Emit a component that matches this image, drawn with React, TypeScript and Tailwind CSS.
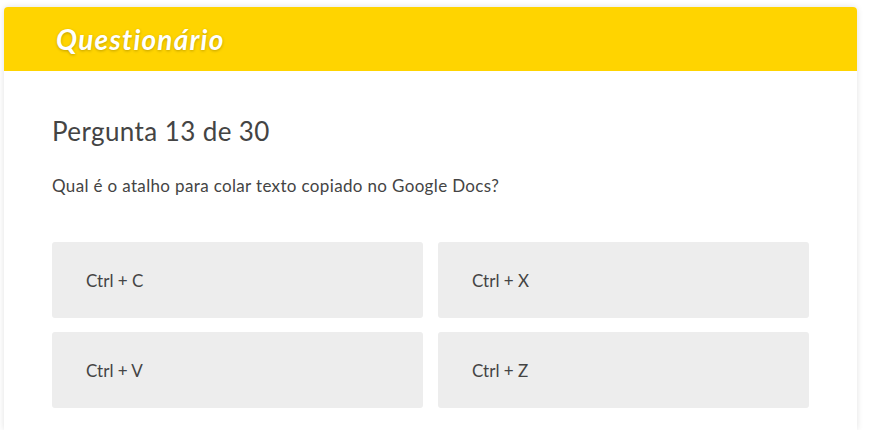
import React from "react";

const options = ["Ctrl + C", "Ctrl + X", "Ctrl + V", "Ctrl + Z"];

const App = () => {
  return (
    <div className="w-[870px] h-[430px] bg-white overflow-hidden font-['Lato',sans-serif]">
      <div className="ml-[4px] mt-[7px] w-[853px] bg-white rounded-t-[4px] shadow-[0_0_6px_rgba(0,0,0,0.12)]">
        <div className="h-[64px] bg-[#ffd400] rounded-t-[4px] flex items-center pl-[52px]">
          <h1 className="text-[28px] tracking-[1.2px] font-bold italic text-white [text-shadow:0_1px_3px_rgba(0,0,0,0.25)]">
            Questionário
          </h1>
        </div>
        <div className="px-[48px] pt-[43px] pb-[22px]">
          <h2 className="text-[26px] leading-[34px] tracking-[0.4px] text-[#444]">Pergunta 13 de 30</h2>
          <p className="mt-[26px] text-[17px] leading-[24px] tracking-[0.35px] text-[#444]">
            Qual é o atalho para colar texto copiado no Google Docs?
          </p>
          <div className="mt-[44px] grid grid-cols-2 gap-x-[15px] gap-y-[14px]">
            {options.map((o) => (
              <button
                key={o}
                className="h-[76px] bg-[#ededed] rounded-[3px] text-left pl-[34px] pt-[2px] text-[17px] text-[#444]"
              >
                {o}
              </button>
            ))}
          </div>
        </div>
      </div>
    </div>
  );
};

export default App;
